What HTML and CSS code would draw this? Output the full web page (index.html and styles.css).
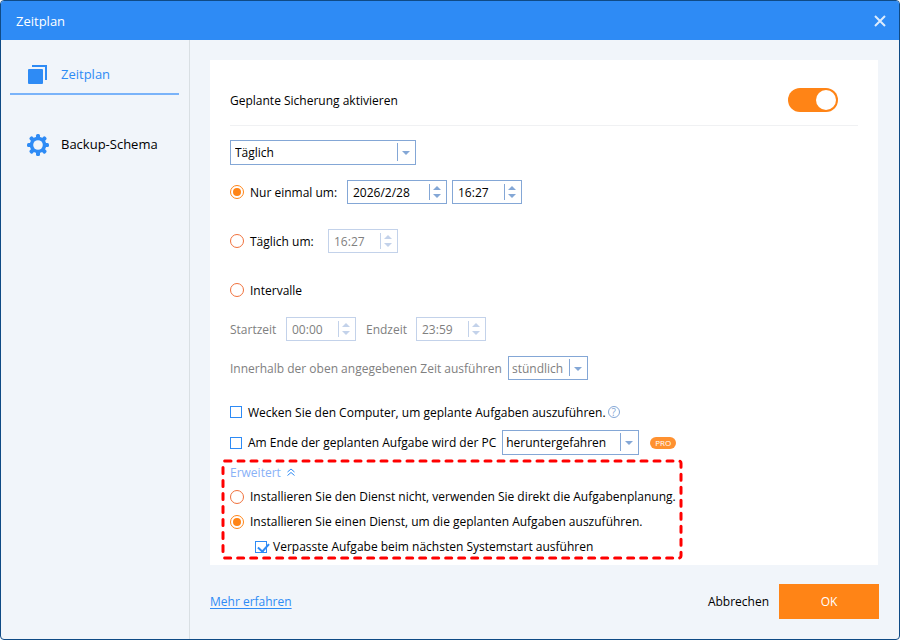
FILE: index.html
```html
<!DOCTYPE html>
<html lang="de">
<head>
  <meta charset="UTF-8" />
  <meta name="viewport" content="width=device-width, initial-scale=1.0" />
  <title>Zeitplan</title>
  <link rel="stylesheet" href="styles.css">
</head>
<body>
  <div class="window">
    <header>
      <h1>Zeitplan</h1>
      <button class="close" type="button" aria-label="Schließen">
        <svg width="12" height="12" viewBox="0 0 12 12"><path d="M1 1L11 11M11 1L1 11" /></svg>
      </button>
    </header>

    <div class="content">
      <nav>
        <a href="#zeitplan" class="active">
          <svg width="22" height="22" viewBox="0 0 22 22">
            <rect x="1" y="6" width="15" height="15" rx="1" fill="#2e8bf5" />
            <path d="M5 3H19V17" fill="none" stroke="#2e8bf5" stroke-width="2" />
          </svg>
          Zeitplan
        </a>
        <a href="#schema">
          <svg width="22" height="24" viewBox="-11 -13 22 24">
            <g fill="#2e8bf5">
              <rect x="-2" y="-11" width="4" height="22" rx="1.5" />
              <rect x="-2" y="-11" width="4" height="22" rx="1.5" transform="rotate(45)" />
              <rect x="-2" y="-11" width="4" height="22" rx="1.5" transform="rotate(90)" />
              <rect x="-2" y="-11" width="4" height="22" rx="1.5" transform="rotate(135)" />
              <circle r="8.3" />
            </g>
            <circle r="4.8" fill="#f1f5fa" />
          </svg>
          Backup-Schema
        </a>
      </nav>

      <main>
        <form class="panel" id="schedule">
          <div class="enable">
            <label for="enabled">Geplante Sicherung aktivieren</label>
            <input type="checkbox" class="toggle" id="enabled" checked>
          </div>

          <div class="row frequency">
            <span class="select">
              <select aria-label="Häufigkeit"><option>Täglich</option></select>
            </span>
          </div>

          <div class="row once">
            <input type="radio" name="mode" id="once" checked>
            <label for="once">Nur einmal um:</label>
            <span class="spin date">
              <input type="text" value="2026/2/28" aria-label="Datum">
              <span class="arrows"><button type="button" aria-label="Mehr"></button><button type="button" aria-label="Weniger"></button></span>
            </span>
            <span class="spin">
              <input type="text" value="16:27" aria-label="Uhrzeit">
              <span class="arrows"><button type="button" aria-label="Mehr"></button><button type="button" aria-label="Weniger"></button></span>
            </span>
          </div>

          <div class="row daily">
            <input type="radio" name="mode" id="daily">
            <label for="daily">Täglich um:</label>
            <span class="spin off">
              <input type="text" value="16:27" aria-label="Tägliche Uhrzeit" disabled>
              <span class="arrows"><button type="button" aria-label="Mehr" disabled></button><button type="button" aria-label="Weniger" disabled></button></span>
            </span>
          </div>

          <div class="row interval">
            <input type="radio" name="mode" id="interval">
            <label for="interval">Intervalle</label>
          </div>

          <div class="row range muted">
            <label for="start">Startzeit</label>
            <span class="spin off">
              <input type="text" id="start" value="00:00" disabled>
              <span class="arrows"><button type="button" aria-label="Mehr" disabled></button><button type="button" aria-label="Weniger" disabled></button></span>
            </span>
            <label for="end">Endzeit</label>
            <span class="spin off">
              <input type="text" id="end" value="23:59" disabled>
              <span class="arrows"><button type="button" aria-label="Mehr" disabled></button><button type="button" aria-label="Weniger" disabled></button></span>
            </span>
          </div>

          <div class="row every muted">
            <label for="every">Innerhalb der oben angegebenen Zeit ausführen</label>
            <span class="select">
              <select id="every" disabled><option>stündlich</option></select>
            </span>
          </div>

          <div class="row wake">
            <input type="checkbox" id="wake">
            <label for="wake">Wecken Sie den Computer, um geplante Aufgaben auszuführen.</label>
            <button type="button" class="help" aria-label="Hilfe">?</button>
          </div>

          <div class="row after">
            <input type="checkbox" id="after">
            <label for="after">Am Ende der geplanten Aufgabe wird der PC</label>
            <span class="select">
              <select aria-label="Aktion"><option>heruntergefahren</option></select>
            </span>
            <span class="pro">PRO</span>
          </div>

          <div class="advanced">
            <svg class="frame" aria-hidden="true"><rect width="100%" height="100%" rx="2" /></svg>
            <button type="button" class="expand">
              Erweitert
              <svg width="8" height="8" viewBox="0 0 8 8"><path d="M0.5 4L4 1L7.5 4M0.5 7.5L4 4.5L7.5 7.5" /></svg>
            </button>
            <div class="row">
              <input type="radio" name="service" id="noservice">
              <label for="noservice">Installieren Sie den Dienst nicht, verwenden Sie direkt die Aufgabenplanung.</label>
            </div>
            <div class="row">
              <input type="radio" name="service" id="service" checked>
              <label for="service">Installieren Sie einen Dienst, um die geplanten Aufgaben auszuführen.</label>
            </div>
            <div class="row missed">
              <input type="checkbox" id="missed" checked>
              <label for="missed">Verpasste Aufgabe beim nächsten Systemstart ausführen</label>
            </div>
          </div>
        </form>

        <footer>
          <a href="#mehr">Mehr erfahren</a>
          <div class="actions">
            <button type="button" class="cancel">Abbrechen</button>
            <button type="submit" form="schedule" class="ok">OK</button>
          </div>
        </footer>
      </main>
    </div>
  </div>
</body>
</html>
```
FILE: styles.css
```css
* { margin: 0; padding: 0; box-sizing: border-box; }
body {
  font-family: 'Open Sans', 'Noto Sans', sans-serif;
  font-size: 12px;
  color: #000;
  background-color: #fff;
}
input, select, button { font: inherit; color: inherit; }
button { background: none; border: none; cursor: pointer; }
.window {
  min-height: 100vh;
  display: flex;
  flex-direction: column;
  background-color: #f1f5fa;
  border: 1px solid #0f4a85;
  border-radius: 4px;
  overflow: hidden;
}
header {
  height: 39px;
  padding: 0 13px 0 15px;
  display: flex;
  align-items: center;
  justify-content: space-between;
  background-color: #2e8bf5;
  color: #fff;
}
h1 { font-size: 13px; font-weight: normal; }
.close { display: flex; }
.close path { stroke: #dcebfd; stroke-width: 2; }
.content { flex: 1; display: flex; }

/* sidebar */
nav {
  flex: none;
  width: 189px;
  padding: 15px 10px 0 9px;
  border-right: 1px solid #d9dfe3;
  display: flex;
  flex-direction: column;
  gap: 30px;
}
nav a {
  height: 40px;
  padding-left: 17px;
  display: flex;
  align-items: center;
  gap: 12px;
  font-size: 13px;
  color: #000;
  text-decoration: none;
  border-bottom: 2px solid transparent;
}
nav a.active { color: #2e8bf5; border-color: #7ab3f9; }

main { flex: 1; padding: 20px 20px 0; }
.panel { margin-right: 1px; padding: 28px 20px 6px; background-color: #fff; }
.enable {
  padding-bottom: 13px;
  display: flex;
  align-items: center;
  justify-content: space-between;
  border-bottom: 1px solid #f0f1f3;
}
.toggle {
  appearance: none;
  width: 50px;
  height: 24px;
  margin-right: 20px;
  padding: 2px;
  border-radius: 12px;
  background-color: #ccc;
  display: flex;
}
.toggle::before {
  content: '';
  width: 20px;
  border-radius: 50%;
  background-color: #fff;
}
.toggle:checked { background-color: #ff8416; justify-content: flex-end; }

.row { min-height: 24px; display: flex; align-items: center; }
.frequency { margin-top: 14px; }
.once, .range, .every { margin-top: 15px; }
.daily, .interval { margin-top: 25px; }
.wake { margin-top: 20px; }
.after { margin-top: 6px; }
.muted { color: #808080; }

/* radios and tick boxes */
input[type="radio"] {
  appearance: none;
  width: 14px;
  height: 14px;
  margin-right: 6px;
  border: 1px solid #f0713c;
  border-radius: 50%;
}
input[type="radio"]:checked {
  padding: 2px;
  border-color: #ff8416;
  background-color: #ff8416;
  background-clip: content-box;
}
.row input[type="checkbox"] {
  appearance: none;
  width: 12px;
  height: 12px;
  margin-right: 6px;
  border: 1px solid #2e8bf5;
  position: relative;
}
.row input[type="checkbox"]:checked::before {
  content: '';
  position: absolute;
  left: 4px;
  top: -1px;
  width: 5px;
  height: 9px;
  border: solid #2e8bf5;
  border-width: 0 2px 2px 0;
  transform: rotate(42deg);
}

/* drop-downs */
.select {
  height: 25px;
  display: flex;
  position: relative;
  border: 1px solid #84a7d6;
  background-color: #fff;
}
.select select {
  appearance: none;
  width: 100%;
  padding: 0 20px 0 4px;
  border: none;
  background: none;
  opacity: 1;
}
.select::before {
  content: '';
  position: absolute;
  right: 17px;
  top: 2px;
  bottom: 3px;
  border-left: 1px solid #84a7d6;
}
.select::after {
  content: '';
  position: absolute;
  right: 5px;
  top: 10px;
  border: 4px solid transparent;
  border-top-color: #84a7d6;
  border-bottom: none;
}
.frequency .select { width: 186px; }
.every .select { width: 80px; height: 24px; }
.every .select select { padding-left: 3px; }
.every label { width: 278px; }
.after .select { width: 137px; }
.after .select select { padding-left: 3px; }

/* time boxes */
.spin {
  width: 70px;
  height: 24px;
  padding: 3px 3px 3px 5px;
  display: flex;
  border: 1px solid #84a7d6;
  background-color: #fff;
}
.spin.date { width: 100px; margin-right: 5px; }
.spin input {
  flex: 1;
  min-width: 0;
  border: none;
  background: none;
}
.arrows {
  width: 14px;
  padding: 2px 0 2px 1px;
  border-left: 1px solid #84a7d6;
  display: flex;
  flex-direction: column;
  justify-content: space-between;
  align-items: center;
}
.arrows button {
  border: 4px solid transparent;
  border-top: none;
  border-bottom: 4px solid #84a7d6;
}
.arrows button + button {
  border-bottom: none;
  border-top: 4px solid #84a7d6;
}
.off, .off .arrows, .off .arrows button { border-color: #c3d2ea; }
.off .arrows button { border-left-color: transparent; border-right-color: transparent; }
.off .arrows button + button { border-top-color: #c3d2ea; }
.off input { color: #808080; }
.once label { width: 97px; }
.daily label { width: 78px; }
.range label { width: 56px; }
.range .spin + label { width: 50px; margin-left: 10px; }

.help {
  width: 12px;
  height: 12px;
  margin-left: 2px;
  border: 1px solid #84a7d6;
  border-radius: 50%;
  color: #84a7d6;
  font-size: 10px;
  line-height: 10px;
}
.after label { margin-right: 6px; }
.pro {
  width: 26px;
  margin-left: 11px;
  border-radius: 6px;
  background-color: #ff9130;
  color: #fff;
  font-size: 8px;
  line-height: 12px;
  text-align: center;
}

/* highlighted service options */
.advanced {
  position: relative;
  width: fit-content;
  min-width: 460px;
  margin: 5px 0 0 -8px;
  padding: 0 6px 0 8px;
}
.advanced .row { min-height: 25px; }
.frame {
  position: absolute;
  inset: 1px;
  width: calc(100% - 2px);
  height: calc(100% - 2px);
  overflow: visible;
  pointer-events: none;
}
.frame rect {
  fill: none;
  stroke: #f00;
  stroke-width: 3;
  stroke-linecap: round;
  stroke-dasharray: 6 7;
}
.expand {
  height: 24px;
  display: flex;
  align-items: center;
  gap: 6px;
  color: #89b1f7;
}
.expand path { fill: none; stroke: #2e8bf5; }
.missed { padding-left: 25px; }

footer {
  margin-top: 19px;
  display: flex;
  align-items: center;
  justify-content: space-between;
}
footer a { color: #2e8bf5; text-underline-offset: 2px; }
.actions { display: flex; gap: 10px; }
.ok {
  width: 100px;
  height: 35px;
  background-color: #ff8416;
  color: #fff;
}
```
